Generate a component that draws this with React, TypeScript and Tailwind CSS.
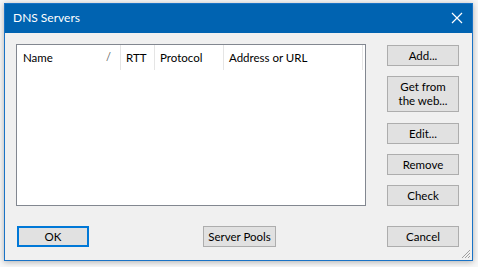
import * as React from 'react';

const font = { fontFamily: 'Lato, "Liberation Sans", sans-serif' };

function Btn({
  children,
  className = '',
  focused = false,
}: {
  children: React.ReactNode;
  className?: string;
  focused?: boolean;
}) {
  return (
    <button
      className={`flex items-center justify-center bg-[#e1e1e1] text-[11.5px] leading-[14px] text-black ${
        focused ? 'border-2 border-[#0078d7]' : 'border border-[#adadad]'
      } ${className}`}
    >
      {children}
    </button>
  );
}

export default function App() {
  return (
    <div className="w-[478px] h-[267px] bg-[#f7f7f7] pt-[3px] pl-[4px]" style={font}>
      <div className="relative w-[469px] h-[258px] border border-[#1a73c6] bg-[#f0f0f0] flex flex-col shadow-[0_1px_6px_rgba(0,0,0,0.3)]">
        {/* Title bar */}
        <div className="h-[29px] bg-[#0063b1] flex items-center justify-between pl-[8px] pr-[9px]">
          <span className="text-white text-[12px] mb-[1px]">DNS Servers</span>
          <svg width="12" height="12" viewBox="0 0 12 12" className="mb-[1px]">
            <path d="M1 1 L11 11 M11 1 L1 11" stroke="white" strokeWidth="1.2" fill="none" />
          </svg>
        </div>

        {/* Body */}
        <div className="flex pl-[11px] pt-[11px]">
          <div className="w-[350px] h-[162px] bg-white border border-[#828790]">
            <div className="flex h-[25px] text-[11.5px] text-black">
              <div className="w-[104px] flex items-center pl-[6px] pr-[9px] justify-between border-r border-[#e5e5e5]">
                <span>Name</span>
                <span className="text-[#666] text-[11px]">/</span>
              </div>
              <div className="w-[34px] flex items-center pl-[5px] border-r border-[#e5e5e5]">RTT</div>
              <div className="w-[69px] flex items-center pl-[5px] border-r border-[#e5e5e5]">Protocol</div>
              <div className="w-[139px] flex items-center pl-[5px] border-r border-[#e5e5e5]">Address or URL</div>
            </div>
          </div>

          <div className="flex flex-col ml-[21px] pt-[1px]">
            <Btn className="w-[72px] h-[21px]">Add...</Btn>
            <Btn className="w-[72px] h-[36px] mt-[10px] flex-col">
              <span>Get from</span>
              <span>the web...</span>
            </Btn>
            <Btn className="w-[72px] h-[21px] mt-[11px]">Edit...</Btn>
            <Btn className="w-[72px] h-[21px] mt-[10px]">Remove</Btn>
            <Btn className="w-[72px] h-[21px] mt-[10px]">Check</Btn>
          </div>
        </div>

        {/* Bottom row */}
        <div className="flex items-center pl-[12px] mt-[20px]">
          <Btn focused className="w-[72px] h-[21px]">OK</Btn>
          <Btn className="w-[73px] h-[21px] ml-[114px]">Server Pools</Btn>
          <Btn className="w-[72px] h-[21px] ml-[111px]">Cancel</Btn>
        </div>

        {/* Resize grip */}
        <svg width="12" height="12" viewBox="0 0 12 12" className="absolute right-[1px] bottom-[1px]">
          <path d="M11 3 L3 11 M11 6 L6 11 M11 9 L9 11" stroke="#a0a0a0" strokeWidth="1" fill="none" />
        </svg>
      </div>
    </div>
  );
}
